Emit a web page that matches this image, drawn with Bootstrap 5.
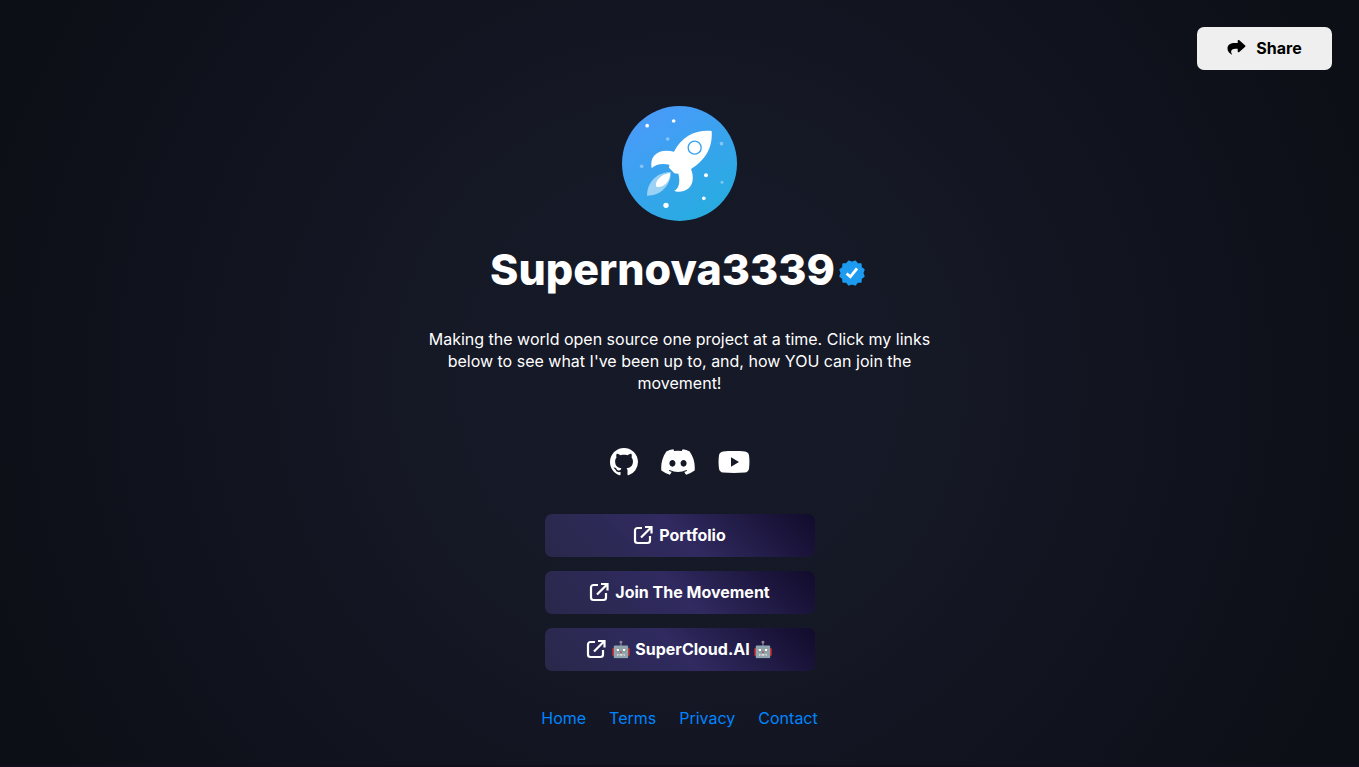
<!DOCTYPE html>
<html lang="en">
<head>
<meta charset="utf-8">
<meta name="viewport" content="width=device-width, initial-scale=1">
<title>Supernova3339</title>
<link href="https://cdn.jsdelivr.net/npm/bootstrap@5.3.0/dist/css/bootstrap.min.css" rel="stylesheet">
<style>
body { font-family: Inter, "Noto Color Emoji", sans-serif; font-size: 16px; color: #fff; background: #0c0e16; }
.page { background: radial-gradient(circle at center, #161927 0%, #151825 35%, #10131d 68%, #0c0f16 92%); border-bottom: 2px solid #100f1c; padding-top: 27px; }
.share-btn { width: 135px; height: 43px; border-radius: 7px; background: #efefef; color: #000; font-weight: 700; border: 0; margin-right: 27px; gap: 10px; padding: 0 0 2px; }
.avatar { margin-top: 36px; }
.profile-name { font-size: 43px; font-weight: 800; line-height: 54px; margin: 21px 0 0; }
.bio { max-width: 540px; line-height: 22px; margin: 32px 0 0; }
.socials { margin-top: 51px; height: 34px; gap: 23px; }
.socials a { color: #fff; display: flex; }
.links { width: 270px; margin-top: 35px; gap: 14px; }
.link-btn { height: 43px; border-radius: 7px; border: 0; color: #fff; font-weight: 700; gap: 6px; padding: 0 0 2px; background: linear-gradient(45deg, #29284a 0%, #302a60 50%, #110b2b 100%); }
.link-btn:hover { color: #fff; }
.foot { margin-top: 35px; gap: 23px; line-height: 24px; }
.foot a { color: #0085ff; text-decoration: none; }
</style>
</head>
<body>
<div class="page min-vh-100 d-flex flex-column align-items-center">
  <button type="button" class="share-btn btn align-self-end d-flex align-items-center justify-content-center">
    <svg width="19" height="19" viewBox="0 0 19 19" fill="currentColor" aria-hidden="true"><path d="M11.2 2.1c.4-.2.8-.1 1.100.2l5.900 5.300c.4.3.4.9 0 1.200l-5.900 5.200c-.3.3-.7.300-1.100.2-.3-.2-.5-.5-.5-.9v-2.600H8.300c-2.400 0-4.200 1.100-4.200 3 0 .9.300 1.700.8 2.200.3.4.1.800-.3.6C2.800 15.500.5 13.800.5 10.500c0-4.100 3.300-5.500 7.200-5.500h3V3c0-.4.2-.7.5-.9z"/></svg>
    Share
  </button>
  <svg class="avatar flex-shrink-0" width="115" height="115" viewBox="36 33 345 345" role="img" aria-label="Rocket">
    <defs><linearGradient id="sky" x1="0.1" y1="0.1" x2="0.65" y2="0.95"><stop offset="0" stop-color="#4a9afa"/><stop offset="1" stop-color="#29abe2"/></linearGradient></defs>
    <circle cx="208.500" cy="205.500" r="172.500" fill="url(#sky)"/>
    <g fill="#fff">
      <path d="M305 108c3 42-11 82-62 114 12 30 6 66-36 68-6 0-11-1-14-3 17-9 17-33 12-51l-12-1-16-17 1-9c-20-5-42-2-53 11-7-36 18-61 67-50 25-47 65-66 113-62z"/>
      <circle cx="111.500" cy="92" r="5.500"/><circle cx="191" cy="78" r="5.500"/><circle cx="288" cy="241" r="6"/><circle cx="281.500" cy="310" r="5.500"/><circle cx="168" cy="331" r="8"/>
      <g opacity=".38"><circle cx="173" cy="132" r="5.500"/><circle cx="334.500" cy="146" r="5.500"/><circle cx="95" cy="214" r="5.500"/><circle cx="336" cy="262" r="4.500"/></g>
      <path opacity=".5" d="M182 231c3 26-19 71-71 71 0-44 34-71 71-71z"/>
      <path d="M180 235c2 20-16 44-40 41-10-12 14-41 40-41z"/>
    </g>
    <circle cx="254" cy="158" r="19.500" fill="#fff" stroke="#36a3ee" stroke-width="4"/>
  </svg>
  <h1 class="profile-name text-center">Supernova3339<svg class="align-middle mx-1" width="26" height="26" viewBox="0 0 26 26" role="img" aria-label="Verified"><path fill="#1d9bf0" stroke="#1d9bf0" stroke-width="1.500" stroke-linejoin="round" d="M13 2.400 16.300 1.200 18.500 3.900 21.900 4.100 22.100 7.500 24.900 9.700 23.700 13 24.900 16.300 22.100 18.500 21.900 21.900 18.500 22.100 16.300 24.900 13 23.700 9.700 24.900 7.500 22.100 4.100 21.900 3.900 18.500 1.100 16.300 2.300 13 1.100 9.700 3.900 7.500 4.100 4.100 7.500 3.900 9.700 1.200z"/><path fill="none" stroke="#fff" stroke-width="2.800" d="m7.600 13.500 3.700 3.300 6.700-8.300"/></svg></h1>
  <p class="bio text-center">Making the world open source one project at a time. Click my links below to see what I've been up to, and, how YOU can join the movement!</p>
  <div class="socials d-flex align-items-center">
    <a href="#" aria-label="GitHub"><svg width="28" height="28" viewBox="0 0 16 16" fill="currentColor"><path d="M8 0C3.580 0 0 3.580 0 8c0 3.540 2.290 6.530 5.470 7.590.4.070.55-.17.55-.38 0-.19-.010-.82-.010-1.490-2.010.37-2.530-.49-2.690-.94-.090-.23-.48-.94-.82-1.130-.28-.15-.68-.52-.010-.53.63-.010 1.080.58 1.230.82.72 1.210 1.870.87 2.330.66.070-.52.28-.87.510-1.070-1.780-.2-3.640-.89-3.640-3.950 0-.87.310-1.590.82-2.150-.080-.2-.36-1.020.080-2.120 0 0 .67-.21 2.200.82.64-.18 1.320-.27 2-.27s1.360.090 2 .27c1.530-1.040 2.200-.82 2.200-.82.440 1.100.160 1.920.080 2.120.51.56.82 1.270.82 2.150 0 3.070-1.870 3.750-3.650 3.950.29.25.54.73.54 1.480 0 1.070-.010 1.930-.010 2.200 0 .21.150.46.55.38A8.010 8.010 0 0 0 16 8c0-4.420-3.580-8-8-8"/></svg></a>
    <a href="#" aria-label="Discord"><svg width="34" height="28" viewBox="26 10 588 490" fill="currentColor"><path d="M524.531,69.836a1.500,1.500,0,0,0-.764-.7A485.065,485.065,0,0,0,404.081,32.030a1.816,1.816,0,0,0-1.923.91,337.461,337.461,0,0,0-14.900,30.600,447.848,447.848,0,0,0-134.426,0,309.541,309.541,0,0,0-15.135-30.600,1.890,1.890,0,0,0-1.924-.91A483.689,483.689,0,0,0,116.085,69.137a1.712,1.712,0,0,0-.788.676C39.068,183.651,18.186,294.690,28.430,404.354a2.016,2.016,0,0,0,.765,1.375A487.666,487.666,0,0,0,176.020,479.918a1.900,1.900,0,0,0,2.063-.676A348.200,348.200,0,0,0,208.120,430.400a1.860,1.860,0,0,0-1.019-2.588,321.173,321.173,0,0,1-45.868-21.853,1.885,1.885,0,0,1-.185-3.126c3.082-2.309,6.166-4.711,9.109-7.137a1.819,1.819,0,0,1,1.900-.256c96.229,43.917,200.410,43.917,295.500,0a1.812,1.812,0,0,1,1.924.233c2.944,2.426,6.027,4.851,9.132,7.160a1.884,1.884,0,0,1-.162,3.126,301.407,301.407,0,0,1-45.890,21.830,1.875,1.875,0,0,0-1,2.611,391.055,391.055,0,0,0,30.014,48.815,1.864,1.864,0,0,0,2.063.7A486.048,486.048,0,0,0,610.700,405.729a1.882,1.882,0,0,0,.765-1.352C623.729,277.594,590.933,167.465,524.531,69.836ZM222.491,337.580c-28.972,0-52.844-26.587-52.844-59.239S193.056,219.100,222.491,219.100c29.665,0,53.306,26.820,52.843,59.239C275.334,310.993,251.924,337.580,222.491,337.580Zm195.380,0c-28.971,0-52.843-26.587-52.843-59.239S388.437,219.100,417.871,219.100c29.667,0,53.307,26.820,52.844,59.239C470.715,310.993,447.538,337.580,417.871,337.580Z"/></svg></a>
    <a href="#" aria-label="YouTube"><svg width="32" height="28" viewBox="0 0 32 28" fill="currentColor"><path fill-rule="evenodd" d="M16 3c4 0 8 .1 11 .5 2.200.3 3.600 1.700 4 3.800.6 4.400.6 9 0 13.400-.4 2.100-1.800 3.500-4 3.800-7 .6-15 .6-22 0-2.200-.3-3.600-1.700-4-3.800-.6-4.400-.6-9 0-13.400.4-2.100 1.800-3.500 4-3.800C8 3.100 12 3 16 3zm-3 6.300v9.400l8-4.700z"/></svg></a>
  </div>
  <svg width="0" height="0" class="d-none"><symbol id="open" viewBox="0 0 20 20"><path fill="none" stroke="#fff" stroke-width="2.200" d="M9 3H4.500A2.500 2.500 0 0 0 2 5.500v10A2.500 2.500 0 0 0 4.500 18h10a2.500 2.500 0 0 0 2.500-2.500V11M12 2h6.500v6.500M18 2.500 8 12.500"/></symbol></svg>
  <nav class="links d-flex flex-column">
    <a href="#" class="link-btn btn d-flex align-items-center justify-content-center"><svg width="20" height="20" aria-hidden="true"><use href="#open"/></svg>Portfolio</a>
    <a href="#" class="link-btn btn d-flex align-items-center justify-content-center"><svg width="20" height="20" aria-hidden="true"><use href="#open"/></svg>Join The Movement</a>
    <a href="#" class="link-btn btn d-flex align-items-center justify-content-center"><svg width="20" height="20" aria-hidden="true"><use href="#open"/></svg>🤖 SuperCloud.AI 🤖</a>
  </nav>
  <footer class="foot d-flex">
    <a href="#">Home</a><a href="#">Terms</a><a href="#">Privacy</a><a href="#">Contact</a>
  </footer>
</div>
<script src="https://cdn.jsdelivr.net/npm/bootstrap@5.3.0/dist/js/bootstrap.bundle.min.js"></script>
</body>
</html>
